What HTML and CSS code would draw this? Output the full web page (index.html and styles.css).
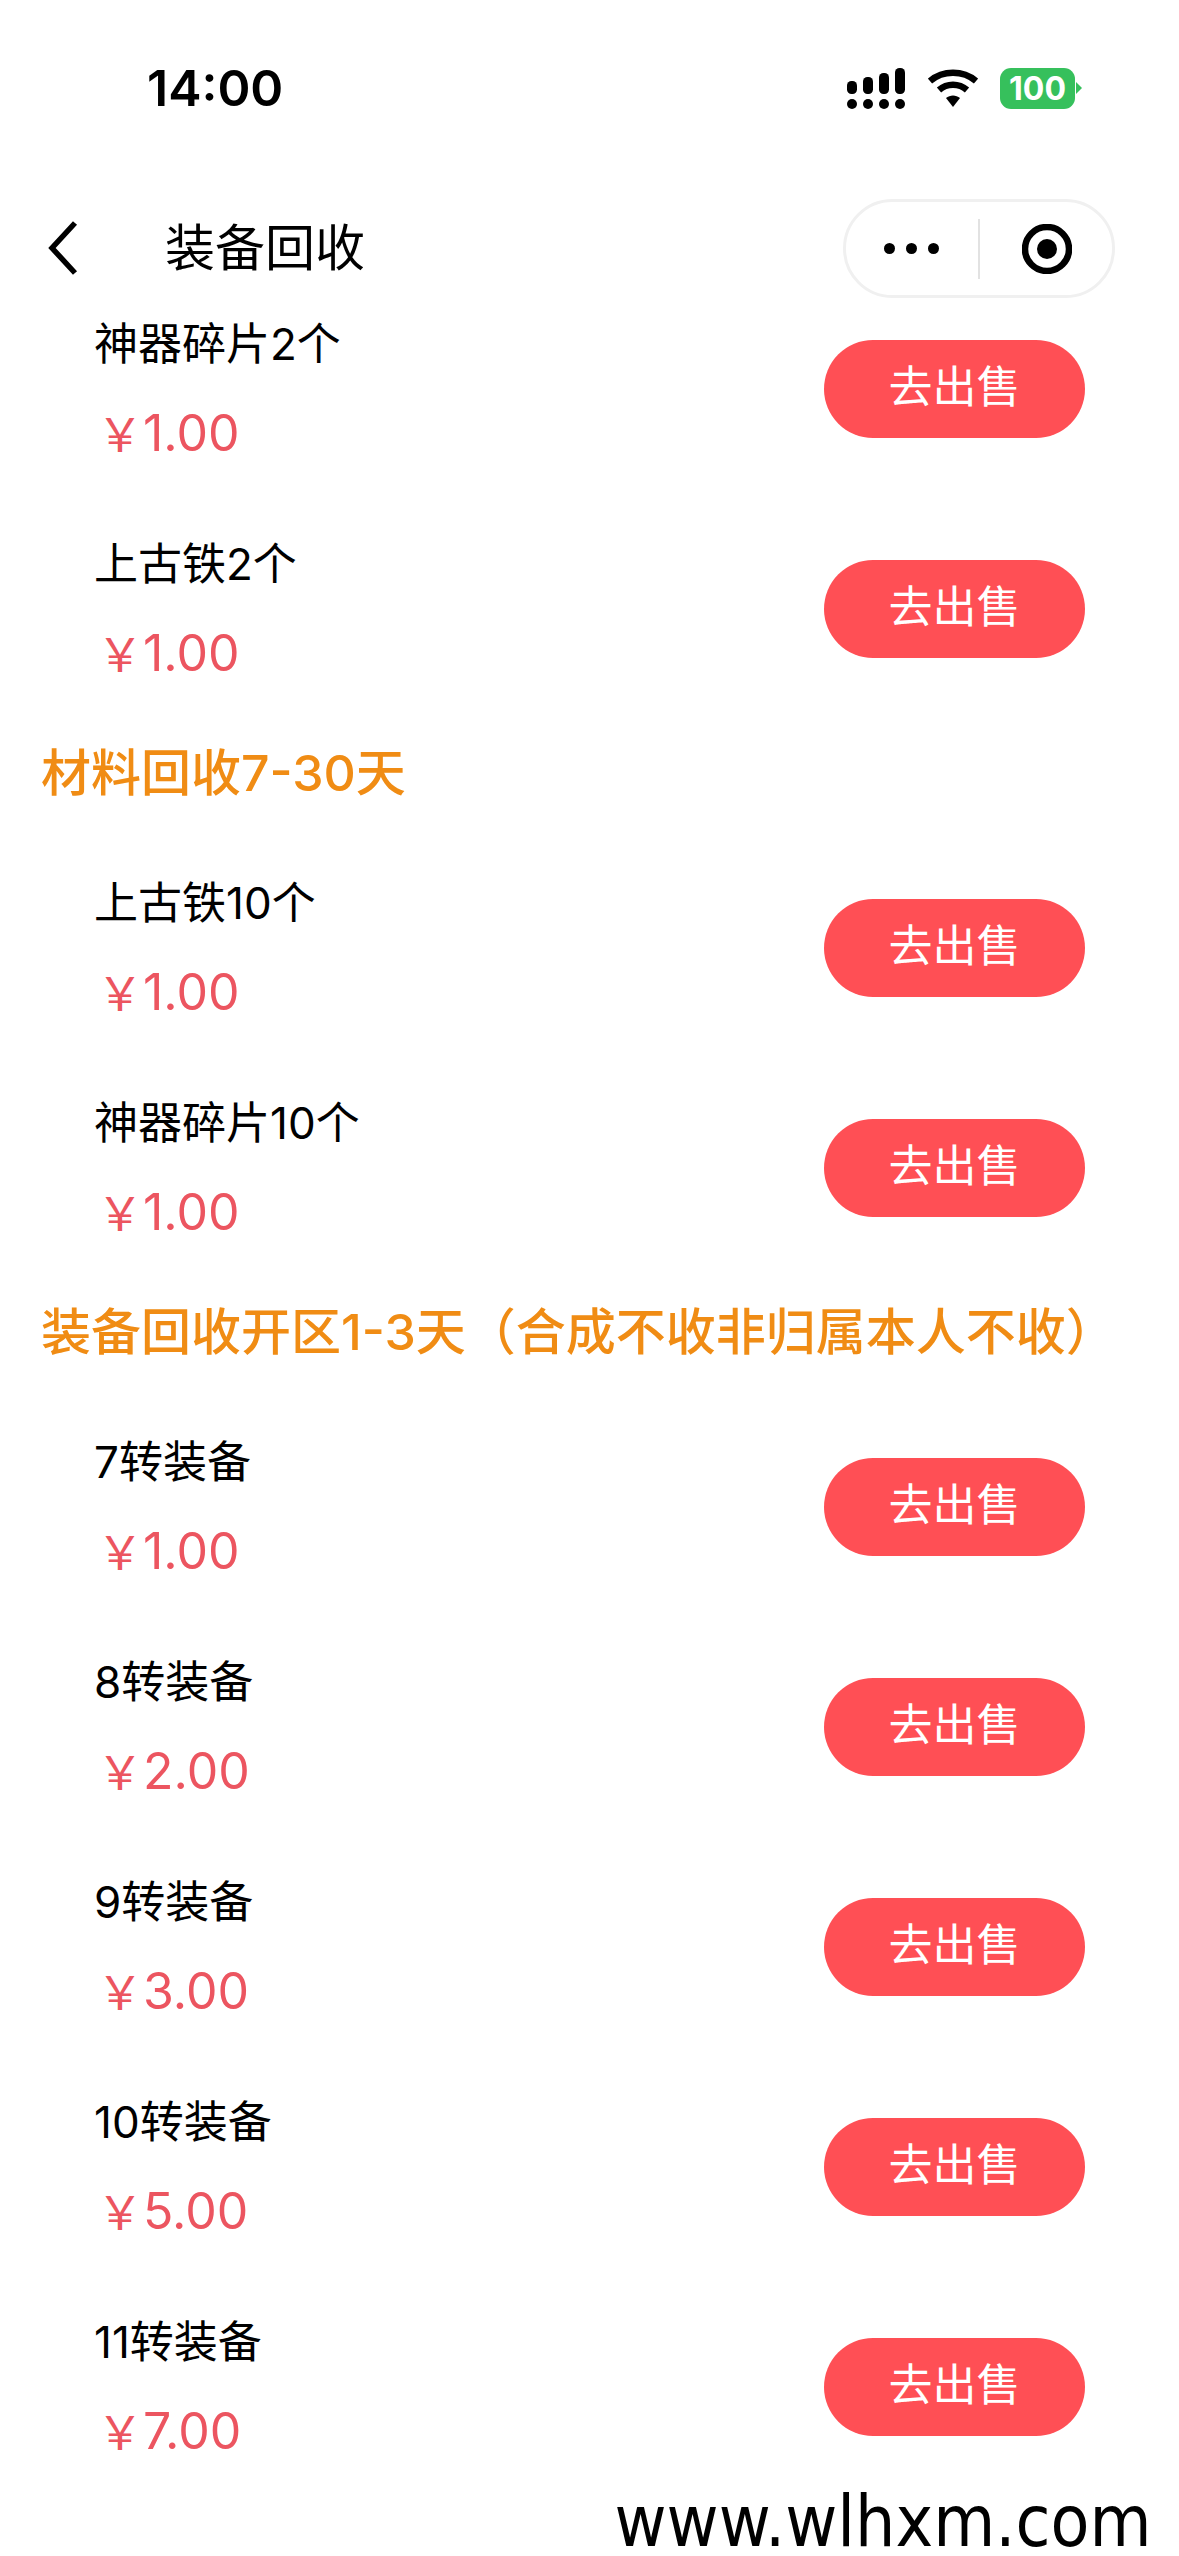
FILE: index.html
```html
<!DOCTYPE html>
<html lang="zh-CN">
<head>
    <meta charset="UTF-8">
    <meta name="viewport" content="width=device-width, initial-scale=1.0">
    <title>装备回收</title>
    <link rel="stylesheet" href="styles.css">
</head>
<body>
    <!-- Status bar -->
    <div class="status-bar">
        <div class="status-time">14:00</div>
        <div class="status-icons">
            <svg class="icon-signal" width="58" height="41" viewBox="0 0 58 41">
                <rect x="0" y="13" width="10" height="13" rx="4.5"/>
                <rect x="16" y="9" width="10" height="17" rx="4.5"/>
                <rect x="32" y="5" width="10" height="21" rx="4.5"/>
                <rect x="48" y="0" width="10" height="26" rx="4.5"/>
                <circle cx="5" cy="36" r="5"/>
                <circle cx="21" cy="36" r="5"/>
                <circle cx="37" cy="36" r="5"/>
                <circle cx="53" cy="36" r="5"/>
            </svg>
            <svg class="icon-wifi" width="50" height="38" viewBox="0 0 50 38">
                <path d="M2 12 C15 1 35 1 48 12" fill="none" stroke="#000" stroke-width="6.5"/>
                <path d="M11 21 C19 14 31 14 39 21" fill="none" stroke="#000" stroke-width="6.5"/>
                <path d="M18 29 C22 25.500 28 25.500 32 29 L25 38 Z"/>
            </svg>
            <div class="battery"><span>100</span></div>
        </div>
    </div>

    <!-- Nav bar -->
    <div class="nav-bar">
        <svg class="nav-back" width="30" height="54" viewBox="0 0 30 54">
            <path d="M27 2 L4 27 L27 52" fill="none" stroke="#000" stroke-width="5.500"/>
        </svg>
        <div class="nav-title">装备回收</div>
        <div class="capsule">
            <div class="capsule-dots"><i></i><i></i><i></i></div>
            <div class="capsule-line"></div>
            <svg width="50" height="50" viewBox="0 0 50 50">
                <circle cx="25" cy="25" r="22" fill="none" stroke="#000" stroke-width="6.500"/>
                <circle cx="25" cy="25" r="10"/>
            </svg>
        </div>
    </div>

    <div class="list">
        <div class="row">
            <div class="row-info"><div class="row-name">神器碎片2个</div><div class="row-price"><span class="yen">￥</span>1.00</div></div>
            <button class="sell-btn">去出售</button>
        </div>
        <div class="row">
            <div class="row-info"><div class="row-name">上古铁2个</div><div class="row-price"><span class="yen">￥</span>1.00</div></div>
            <button class="sell-btn">去出售</button>
        </div>

        <div class="section-title">材料回收7-30天</div>
        <div class="row">
            <div class="row-info"><div class="row-name">上古铁10个</div><div class="row-price"><span class="yen">￥</span>1.00</div></div>
            <button class="sell-btn">去出售</button>
        </div>
        <div class="row">
            <div class="row-info"><div class="row-name">神器碎片10个</div><div class="row-price"><span class="yen">￥</span>1.00</div></div>
            <button class="sell-btn">去出售</button>
        </div>

        <div class="section-title">装备回收开区1-3天（合成不收非归属本人不收）</div>
        <div class="row">
            <div class="row-info"><div class="row-name">7转装备</div><div class="row-price"><span class="yen">￥</span>1.00</div></div>
            <button class="sell-btn">去出售</button>
        </div>
        <div class="row">
            <div class="row-info"><div class="row-name">8转装备</div><div class="row-price"><span class="yen">￥</span>2.00</div></div>
            <button class="sell-btn">去出售</button>
        </div>
        <div class="row">
            <div class="row-info"><div class="row-name">9转装备</div><div class="row-price"><span class="yen">￥</span>3.00</div></div>
            <button class="sell-btn">去出售</button>
        </div>
        <div class="row">
            <div class="row-info"><div class="row-name">10转装备</div><div class="row-price"><span class="yen">￥</span>5.00</div></div>
            <button class="sell-btn">去出售</button>
        </div>
        <div class="row">
            <div class="row-info"><div class="row-name">11转装备</div><div class="row-price"><span class="yen">￥</span>7.00</div></div>
            <button class="sell-btn">去出售</button>
        </div>
    </div>

    <div class="watermark">www.wlhxm.com</div>
</body>
</html>
```

FILE: styles.css
```css
body {
    font-family: Inter, "Noto Sans CJK SC", sans-serif;
    margin: 0;
    padding: 0;
    height: 2556px;
    overflow: hidden;
    background-color: #fff;
    color: #000;
}

.status-bar {
    height: 176px;
    display: flex;
    justify-content: space-between;
    align-items: center;
    padding: 0 104px 0 147px;
}

.status-time {
    font-size: 50px;
    font-weight: 600;
}

.status-icons {
    display: flex;
    align-items: center;
}

.icon-wifi {
    margin-left: 23px;
}

.battery {
    position: relative;
    width: 75px;
    height: 41px;
    margin-left: 22px;
    background: #36c05c;
    border-radius: 11px;
    color: #fff;
    font-size: 32px;
    font-weight: 700;
    line-height: 41px;
    text-align: center;
}

/* battery tip */
.battery::after {
    content: "";
    position: absolute;
    left: 76px;
    top: 14px;
    border-left: 6px solid #36c05c;
    border-top: 6px solid transparent;
    border-bottom: 6px solid transparent;
}

.nav-bar {
    height: 103px;
    box-sizing: border-box;
    padding: 23px 64px 0 48px;
    display: flex;
    align-items: flex-start;
}

.nav-back {
    margin-top: 22px;
}

.nav-title {
    flex: 1;
    margin-left: 87px;
    font-size: 50px;
    line-height: 99px;
}

.capsule {
    width: 272px;
    height: 99px;
    box-sizing: border-box;
    border: 3px solid #f0f0f0;
    border-radius: 50px;
    display: flex;
    align-items: center;
    padding-left: 38px;
}

.capsule-dots {
    display: flex;
    gap: 11px;
}

.capsule-dots i {
    width: 11px;
    height: 11px;
    border-radius: 50%;
    background: #000;
}

.capsule-line {
    width: 2px;
    height: 60px;
    margin: 0 42px 0 39px;
    background: #e2e2e2;
}

.row {
    height: 220px;
    display: flex;
    justify-content: space-between;
    align-items: center;
    padding: 0 94px 0 94px;
}

.row-name {
    font-size: 44px;
    line-height: 60px;
}

.row-price {
    margin-top: 29px;
    padding-left: 3px;
    color: #ec5560;
    font-size: 50px;
    line-height: 60px;
}

.yen {
    font-size: 46px;
}

.sell-btn {
    width: 261px;
    height: 98px;
    border: none;
    border-radius: 49px;
    background: #ff4f55;
    color: #fff;
    font-family: inherit;
    font-size: 44px;
    padding: 0 0 10px;
}

.section-title {
    height: 119px;
    box-sizing: border-box;
    padding: 24px 0 0 41px;
    color: #f08c14;
    font-size: 50px;
    font-weight: 500;
    line-height: 60px;
    white-space: nowrap;
}

/* DejaVu is wider than the original, squeezed to fit */
.watermark {
    text-align: right;
    padding-right: 31px;
    font-family: "DejaVu Sans", sans-serif;
    font-size: 72px;
    line-height: 48px;
    transform: scaleX(0.885);
    transform-origin: right;
}
```
